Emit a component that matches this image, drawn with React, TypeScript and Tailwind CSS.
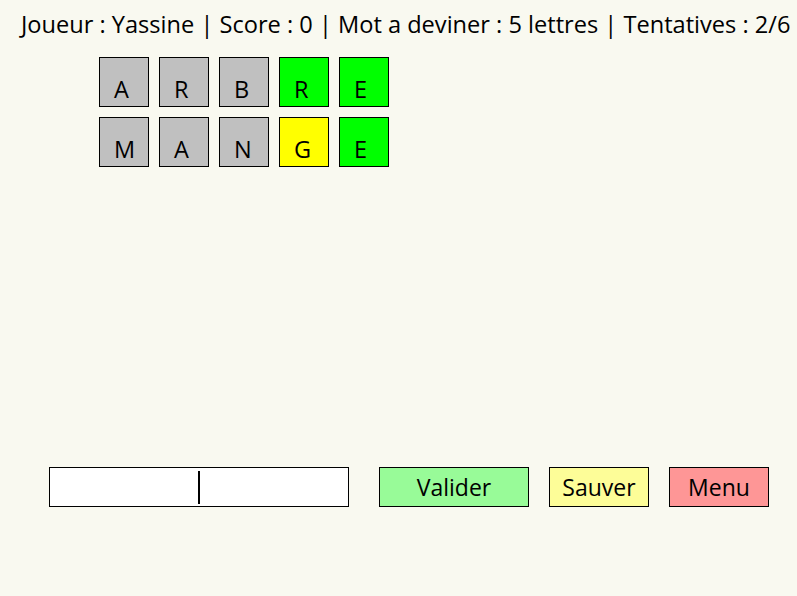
const rows = [
  [
    { l: "A", c: "bg-[#c0c0c0]" },
    { l: "R", c: "bg-[#c0c0c0]" },
    { l: "B", c: "bg-[#c0c0c0]" },
    { l: "R", c: "bg-[#00ff00]" },
    { l: "E", c: "bg-[#00ff00]" },
  ],
  [
    { l: "M", c: "bg-[#c0c0c0]" },
    { l: "A", c: "bg-[#c0c0c0]" },
    { l: "N", c: "bg-[#c0c0c0]" },
    { l: "G", c: "bg-[#ffff00]" },
    { l: "E", c: "bg-[#00ff00]" },
  ],
];

export default function App() {
  return (
    <div
      className="w-[797px] h-[596px] bg-[#f9f9f0] text-black overflow-hidden flex flex-col"
      style={{ fontFamily: '"Open Sans", "Noto Sans", sans-serif' }}
    >
      <div className="pl-[21px] pt-[8px] text-[23.6px] leading-[32px] whitespace-nowrap">
        Joueur : Yassine | Score : 0 | Mot a deviner : 5 lettres | Tentatives : 2/6
      </div>

      <div className="ml-[99px] mt-[17px] flex flex-col gap-[10px]">
        {rows.map((row, i) => (
          <div key={i} className="flex gap-[10px]">
            {row.map((t, j) => (
              <div
                key={j}
                className={`w-[50px] h-[50px] border border-black ${t.c} flex justify-start items-end pl-[14px] pb-[5px] text-[23.5px] leading-[24px]`}
              >
                {t.l}
              </div>
            ))}
          </div>
        ))}
      </div>

      <div className="mt-auto mb-[89px] flex items-center text-[23px]">
        <div className="ml-[49px] w-[300px] h-[40px] border border-black bg-white flex items-center justify-center">
          <div className="w-[2px] h-[33px] bg-black" />
        </div>
        <button className="ml-[30px] w-[150px] h-[40px] border border-black bg-[#98fb98] leading-none">
          Valider
        </button>
        <button className="ml-[20px] w-[100px] h-[40px] border border-black bg-[#fdfd98] leading-none">
          Sauver
        </button>
        <button className="ml-[20px] w-[100px] h-[40px] border border-black bg-[#fe9696] leading-none">
          Menu
        </button>
      </div>
    </div>
  );
}
